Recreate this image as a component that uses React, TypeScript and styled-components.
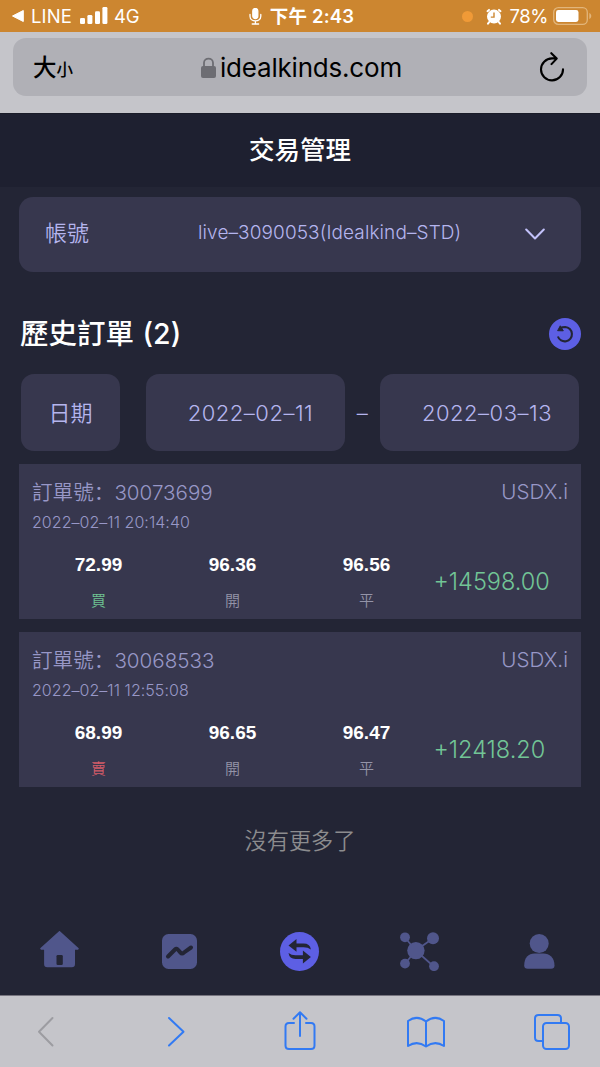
import React from 'react';
import styled, { createGlobalStyle } from 'styled-components';

const GlobalStyle = createGlobalStyle`
  * { box-sizing: border-box; }
  body { margin: 0; background: #232535; }
`;

const cjk = `'Noto Sans CJK TC', sans-serif`;

const Screen = styled.div`
  width: 600px;
  height: 1067px;
  overflow: hidden;
  display: flex;
  flex-direction: column;
  background: #232535;
  font-family: Inter, ${cjk};
  font-weight: 350;
  white-space: nowrap;
  svg { display: block; flex: none; }
`;

const StatusBar = styled.header`
  height: 32px;
  flex: none;
  display: grid;
  grid-template-columns: 1fr auto 1fr;
  align-items: center;
  padding: 0 8px 0 11px;
  background: #cc8630;
  color: #fff;
  font-size: 18.5px;
  font-weight: 400;
  line-height: 30px;
`;
const StatusGroup = styled.div<{ $end?: boolean }>`
  display: flex;
  align-items: center;
  justify-content: ${p => (p.$end ? 'flex-end' : 'flex-start')};
`;
const Carrier = styled.span`
  margin: 0 8px 0 6px;
  letter-spacing: 0.15px;
`;
const Network = styled.span`
  margin-left: 6px;
  letter-spacing: -0.2px;
`;
const Clock = styled.span`
  margin-left: 8px;
  font-weight: 600;
  letter-spacing: 0.2px;
`;
const Level = styled.span`
  margin: 0 5px 0 7px;
  letter-spacing: -0.4px;
`;
const MicDot = styled.i`
  width: 11px;
  height: 11px;
  border-radius: 50%;
  background: #f09a37;
  margin-right: 13px;
`;

const AddressBar = styled.div`
  height: 81px;
  flex: none;
  padding: 6px 13px 0;
  background: #c5c5ca;
`;
const AddressField = styled.div`
  height: 58px;
  border-radius: 13px;
  background: #b0b0b6;
  color: #000;
  display: grid;
  grid-template-columns: 1fr auto 1fr;
  align-items: center;
  padding: 0 22px 0 20px;
`;
const TextSize = styled.div`
  font: 500 23.5px/40px ${cjk};
  small { font-size: 16.5px; }
`;
const Host = styled.div`
  display: flex;
  align-items: center;
  gap: 4px;
  padding: 2px 0 0 5px;
  font-size: 26px;
  font-weight: 400;
  letter-spacing: -0.2px;
  line-height: 40px;
`;
const Reload = styled.div`
  justify-self: end;
`;

const PageHeader = styled.h1`
  height: 74px;
  flex: none;
  margin: 0;
  background: #1e2030;
  border-top: 1px solid #1a1c28;
  color: #fff;
  text-align: center;
  font: 500 25.5px/68px ${cjk};
`;
const Main = styled.main`
  flex: 1;
  padding: 10px 19px 0;
`;
const Account = styled.section`
  height: 75px;
  border-radius: 14px;
  background: #37374e;
  color: #b5b5ee;
  display: flex;
  align-items: center;
  padding: 0 36px 4px 26px;
  font-size: 22px;
  svg { margin-top: 4px; }
`;
const Label = styled.span`
  font: 350 22px/30px ${cjk};
  padding-bottom: 4px;
  letter-spacing: 0;
`;
const AccountName = styled.span`
  margin-left: 109px;
  flex: 1;
  font-size: 19px;
  letter-spacing: 0.1px;
`;
const TitleRow = styled.div`
  height: 102px;
  padding: 22px 0 0 1px;
  display: flex;
  align-items: center;
  justify-content: space-between;
`;
const Title = styled.h2`
  margin: 0;
  color: #fff;
  font: 500 28.5px/40px Inter, ${cjk};
  word-spacing: 1px;
`;
const Filters = styled.div`
  display: flex;
  align-items: center;
  height: 77px;
  padding: 0 2px;
  color: #b5b5ee;
  font-size: 22px;
  letter-spacing: 0.5px;
`;
const FilterBox = styled.div<{ $w: number; $shift?: number }>`
  width: ${p => p.$w}px;
  height: 77px;
  border-radius: 13px;
  background: #37374e;
  display: flex;
  align-items: center;
  justify-content: center;
  padding-left: ${p => p.$shift ?? 0}px;
`;
const Gap = styled.span<{ $w: number }>`
  width: ${p => p.$w}px;
  text-align: center;
`;
const Order = styled.article`
  height: 155px;
  margin-top: 13px;
  padding: 13px 13px 0;
  background: #37374e;
  color: #9897c7;
`;
const OrderHead = styled.div`
  display: flex;
  align-items: center;
  justify-content: space-between;
  height: 30px;
  font-size: 20.6px;
  line-height: 30px;
`;
const OrderId = styled.span`
  margin-top: -1px;
`;
const OrderLabel = styled.span`
  font-family: 'Noto Sans CJK TC', sans-serif;
`;
const Colon = styled.span`
  font-family: 'Noto Sans CJK SC', sans-serif;
`;
const OrderTime = styled.div`
  font-size: 16px;
  line-height: 30px;
  letter-spacing: 0.04px;
`;
const OrderGrid = styled.div`
  display: grid;
  grid-template-columns: repeat(4, 134px);
  height: 82px;
  padding-top: 14px;
  margin-left: -0.5px;
`;
const Cell = styled.div`
  display: flex;
  flex-direction: column;
  align-items: center;
`;
const Price = styled.b`
  color: #fff;
  font: bold 19px/28px 'Liberation Sans', sans-serif;
`;
const Tag = styled.span<{ $c?: string }>`
  color: ${p => p.$c ?? '#9494a8'};
  font: 350 15px/24px ${cjk};
  margin-top: 9px;
`;
const Profit = styled.div`
  color: #72c596;
  font-size: 23.5px;
  line-height: 62px;
`;
const Empty = styled.p`
  margin: 37px 0 0;
  color: #8c8c8e;
  text-align: center;
  font: 350 22.2px/30px ${cjk};
`;
const Tabs = styled.nav`
  height: 88px;
  flex: none;
  display: grid;
  grid-template-columns: repeat(5, 120px);
  justify-items: center;
  align-items: center;
  padding-bottom: 2px;
  border-bottom: 1px solid #77757f;
`;
const BrowserBar = styled.footer`
  height: 71px;
  flex: none;
  background: #c5c5ca;
  display: flex;
  justify-content: space-between;
  padding: 12px 29px 0 27px;
`;

type OrderData = { id: string; time: string; volume: string; side: string; color: string; open: string; close: string; profit: string };
const orders: OrderData[] = [
  { id: '30073699', time: '2022–02–11 20:14:40', volume: '72.99', side: '買', color: '#6fc392', open: '96.36', close: '96.56', profit: '+14598.00' },
  { id: '30068533', time: '2022–02–11 12:55:08', volume: '68.99', side: '賣', color: '#d35c69', open: '96.65', close: '96.47', profit: '+12418.20' },
];

const muted = '#50568b';
const accent = '#5d5fe4';
const ink = '#232535';

const BackTriangle = () => <svg width="14" height="14" viewBox="0 0 14 14"><path d="M1.5 7 12.3 1.5v11z" fill="#fff" stroke="#fff" strokeLinejoin="round" /></svg>;
const Signal = () => (
  <svg width="28" height="18" viewBox="0 0 28 18" fill="#fff">
    <rect y="11" width="5" height="6" rx="1.3" /><rect x="7.4" y="8" width="5" height="9" rx="1.3" />
    <rect x="15" y="4.3" width="5" height="12.7" rx="1.3" /><rect x="22.4" y="0" width="5" height="17" rx="1.3" />
  </svg>
);
const Mic = () => (
  <svg width="13" height="17" viewBox="0 0 13 17" fill="none" stroke="#fff" strokeWidth="1.3" strokeLinecap="round">
    <rect x="3.8" y=".5" width="5" height="10" rx="2.5" fill="#fff" /><path d="M1 6.5v1.8c0 6.2 10.8 6.2 10.8 0V6.5M6.4 13v2.8M3.2 16h6.4" />
  </svg>
);
const Alarm = () => (
  <svg width="16" height="17" viewBox="0 0 16 17">
    <circle cx="8" cy="8.6" r="7" fill="#fff" />
    <path d="M1.5 3.2 3 1.9M14.5 3.2 13 1.9M3.2 14 2 15.6M12.8 14l1.2 1.6" stroke="#fff" strokeWidth="2" strokeLinecap="round" />
    <path d="M8 4.5v4.6H4.8" fill="none" stroke="#cc8630" strokeWidth="1.4" />
  </svg>
);
const Battery = () => (
  <svg width="39" height="18" viewBox="0 0 39 18">
    <rect x=".7" y=".7" width="33.6" height="16.6" rx="4.6" fill="none" stroke="#e2b57a" strokeWidth="1.3" />
    <rect x="3" y="3" width="22.5" height="12" rx="2.4" fill="#fff" /><path d="M36.3 6v6c2.6-1 2.6-5 0-6z" fill="#e2b57a" />
  </svg>
);
const Lock = () => (
  <svg width="15" height="22" viewBox="0 0 15 22"><rect y="9" width="15" height="12" rx="2" fill="#6d6d73" /><path d="M3 10V5.8C3 .1 12 .1 12 5.8V10" fill="none" stroke="#6d6d73" strokeWidth="1.8" /></svg>
);
const ReloadIcon = () => (
  <svg width="26" height="30" viewBox="0 0 26 30" fill="none" stroke="#000" strokeWidth="2.1" strokeLinecap="round" strokeLinejoin="round">
    <path d="M17.6 6.4H13A11 11 0 1 0 24 17.2M12.3 1.2l5.4 5.4-5.2 5.5" />
  </svg>
);
const Chevron = () => <svg width="20" height="13" viewBox="0 0 20 13" fill="none" stroke="#c3c2fb" strokeWidth="2" strokeLinecap="round" strokeLinejoin="round"><path d="m1.2 1.5 8.8 9 8.8-9" /></svg>;
const Refresh = () => (
  <svg width="32" height="32" viewBox="0 0 32 32">
    <circle cx="16" cy="16" r="16" fill={accent} />
    <path d="M11 10.3Q13.2 9 16.2 9A7.2 7.2 0 1 1 8.9 18.5" fill="none" stroke={ink} strokeWidth="2.1" />
    <path d="M11.3 7.8 8.6 12.7l5.7.1z" fill={ink} stroke={ink} strokeLinejoin="round" />
  </svg>
);

const HomeIcon = () => (
  <svg width="40" height="40" viewBox="0.5 1 40 40" fill={muted}>
    <path d="M20 .8 39.2 18.3q.3 1.2-.8 1.4H35.5V34q0 3.2-3.2 3.2H7.8q-3.2 0-3.2-3.2V19.7H1.7Q.5 19.5.7 18.3z" />
    <rect x="17" y="25" width="6.3" height="10" rx="1.3" fill={ink} />
  </svg>
);
const ChartIcon = () => (
  <svg width="40" height="40" viewBox="0.5 0 40 40"><rect x="2.5" y="3" width="35" height="35" rx="6.5" fill={muted} /><path d="M8.5 25.5 15.5 18.5Q17 17 18.5 18.7L21 21.6Q22.5 23.3 24.2 21.7L31.5 16.5" fill="none" stroke={ink} strokeWidth="4" strokeLinecap="round" /></svg>
);
const SwapIcon = () => (
  <svg width="40" height="40" viewBox="0.5 0 40 40">
    <circle cx="20" cy="20.5" r="19.5" fill={accent} />
    <g fill={ink}>
      <path d="M9 14.4 17 8V12.5H24Q30.5 12.5 31.4 18.4Q28.5 16.2 24 16.2H17V20.8Z" />
      <path d="M31.4 26 23.4 32.400V27.900H16Q9.900 27.900 9 22Q11.900 24.200 16 24.200H23.400V19.600Z" />
    </g>
  </svg>
);
const NetworkIcon = () => (
  <svg width="40" height="40" viewBox="0.5 0 40 40" fill={muted}>
    <path d="m5.3 6.3 11 13.2L33.3 7.5M5.3 33l11-13.5 18 16" fill="none" stroke={muted} strokeWidth="1.7" />
    <circle cx="5.5" cy="6.3" r="4.9" /><circle cx="33.5" cy="7.3" r="6" /><circle cx="16.4" cy="19.6" r="8.7" /><circle cx="5.5" cy="32.6" r="4.9" /><circle cx="34.5" cy="35.2" r="4.9" />
  </svg>
);
const UserIcon = () => (
  <svg width="40" height="40" viewBox="0.5 0 40 40" fill={muted}><circle cx="19.7" cy="12.5" r="9.5" /><path d="M4.7 34.5C4.7 26.5 9 22.5 15 22.5h9c6 0 11 4 11 12q0 3.3-3.5 3.3H8.200q-3.500 0-3.500-3.300Z" /></svg>
);

const blue = { fill: 'none', stroke: '#327af3', strokeWidth: 2, strokeLinecap: 'round', strokeLinejoin: 'round' } as const;

export default function App() {
  return (
    <Screen>
      <GlobalStyle />
      <StatusBar>
        <StatusGroup><BackTriangle /><Carrier>LINE</Carrier><Signal /><Network>4G</Network></StatusGroup>
        <StatusGroup><Mic /><Clock>下午 2:43</Clock></StatusGroup>
        <StatusGroup $end><MicDot /><Alarm /><Level>78%</Level><Battery /></StatusGroup>
      </StatusBar>
      <AddressBar>
        <AddressField>
          <TextSize>大<small>小</small></TextSize>
          <Host><Lock />idealkinds.com</Host>
          <Reload><ReloadIcon /></Reload>
        </AddressField>
      </AddressBar>
      <PageHeader>交易管理</PageHeader>
      <Main>
        <Account><Label>帳號</Label><AccountName>live–3090053(Idealkind–STD)</AccountName><Chevron /></Account>
        <TitleRow><Title>歷史訂單 (2)</Title><Refresh /></TitleRow>
        <Filters>
          <FilterBox $w={99}><Label>日期</Label></FilterBox>
          <Gap $w={26} />
          <FilterBox $w={199} $shift={10}>2022–02–11</FilterBox>
          <Gap $w={35}>–</Gap>
          <FilterBox $w={199} $shift={15}>2022–03–13</FilterBox>
        </Filters>
        {orders.map(o => (
          <Order key={o.id}>
            <OrderHead><OrderId><OrderLabel>訂單號<Colon lang="zh-CN">：</Colon></OrderLabel>{o.id}</OrderId><span>USDX.i</span></OrderHead>
            <OrderTime>{o.time}</OrderTime>
            <OrderGrid>
              <Cell><Price>{o.volume}</Price><Tag $c={o.color}>{o.side}</Tag></Cell>
              <Cell><Price>{o.open}</Price><Tag>開</Tag></Cell>
              <Cell><Price>{o.close}</Price><Tag>平</Tag></Cell>
              <Profit>{o.profit}</Profit>
            </OrderGrid>
          </Order>
        ))}
        <Empty>沒有更多了</Empty>
      </Main>
      <Tabs><HomeIcon /><ChartIcon /><SwapIcon /><NetworkIcon /><UserIcon /></Tabs>
      <BrowserBar>
        <svg width="38" height="48" viewBox="0 0 38 48" {...blue} stroke="#9c9ca1"><path d="M25.5 10 12 23.7 25.5 37.5" /></svg>
        <svg width="38" height="48" viewBox="0 0 38 48" {...blue}><path d="M15 10 29.5 23.7 15 37.5" /></svg>
        <svg width="38" height="48" viewBox="-3 0 38 48" {...blue}><path d="M11 15H6q-3.5 0-3.5 3.5V37.5q0 3.5 3.5 3.5H28q3.5 0 3.5-3.5V18.5q0-3.5-3.5-3.5H23M17 28V4.5M10.5 10.8 17 4.2l6.5 6.6" /></svg>
        <svg width="38" height="48" viewBox="1 0 38 48" {...blue}><path d="M20 13.5Q11 6.5 2 13V38Q11 32 20 38.5Q29 32 38 38V13Q29 6.5 20 13.5V38" /></svg>
        <svg width="38" height="48" viewBox="0 0 38 48" {...blue}><rect x="10" y="15" width="26" height="26" rx="3.5" /><path d="M10 33H5.5Q2 33 2 29.5V10.5Q2 7 5.5 7H24.5Q28 7 28 10.5V15" /></svg>
      </BrowserBar>
    </Screen>
  );
}
